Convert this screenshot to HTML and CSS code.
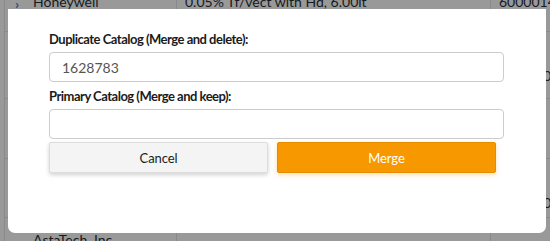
FILE: index.html
```html
<!DOCTYPE html>
<html lang="en">
<head>
    <meta charset="UTF-8">
    <title>Merge Catalog</title>
    <link rel="stylesheet" href="styles.css">
</head>
<body>
    <div class="backdrop">
        <table class="grid">
            <tr class="row-first">
                <td class="col-name"><span class="chevron">&rsaquo;</span>Honeywell</td>
                <td class="col-desc">0.05% Tf/vect with Hd, 6.00lt</td>
                <td class="col-num">6000014</td>
            </tr>
            <tr class="row-two">
                <td class="col-name"></td>
                <td class="col-desc"></td>
                <td class="col-num"><span class="far">(1000)</span></td>
            </tr>
            <tr class="row-three">
                <td class="col-name"></td>
                <td class="col-desc"></td>
                <td class="col-num"></td>
            </tr>
            <tr class="row-four">
                <td class="col-name"></td>
                <td class="col-desc"></td>
                <td class="col-num"><span class="far">(1000)</span></td>
            </tr>
            <tr class="row-last">
                <td class="col-name">AstaTech, Inc.</td>
                <td class="col-desc"></td>
                <td class="col-num"></td>
            </tr>
        </table>
    </div>

    <div class="modal">
        <label class="field-label" for="duplicate">Duplicate Catalog (Merge and delete):</label>
        <input class="field-input first" type="text" id="duplicate" value="1628783">
        <label class="field-label" for="primary">Primary Catalog (Merge and keep):</label>
        <input class="field-input" type="text" id="primary">
        <div class="actions">
            <button class="btn btn-cancel">Cancel</button>
            <button class="btn btn-merge">Merge</button>
        </div>
    </div>
</body>
</html>
```

FILE: styles.css
```css
html, body {
    overflow: hidden;
}
body {
    margin: 0;
    background-color: #999999;
    font-family: Lato, "Open Sans", sans-serif;
}
.backdrop {
    height: 241px;
    overflow: hidden;
}
.grid {
    border-collapse: collapse;
    table-layout: fixed;
    margin-top: -20px;
    margin-left: 4px;
    width: 546px;
    color: #161a22;
    font-size: 14px;
}
.grid td {
    border-left: 1px solid #8a8a8a;
    border-bottom: 1px solid #8a8a8a;
    vertical-align: top;
    padding: 13px 0 0 8px;
    white-space: nowrap;
    overflow: hidden;
}
.grid td.col-name {
    width: 143px;
    padding-left: 28px;
    position: relative;
}
.col-desc {
    width: 305px;
}
.col-num {
    width: 54px;
}
.row-first { height: 51px; }
.row-two { height: 67px; }
.row-three { height: 60px; }
.row-four { height: 59px; }
.row-last { height: 40px; }
.chevron {
    position: absolute;
    left: 10px;
    top: 15px;
    color: #1d4f8a;
    font-weight: bold;
}
.far {
    display: block;
    padding-top: 22px;
    text-align: right;
    margin-right: -2px;
}
.modal {
    position: absolute;
    left: 8px;
    top: 9px;
    width: 538px;
    height: 224px;
    box-sizing: border-box;
    background: #ffffff;
    border-radius: 0 0 7px 7px;
    padding: 20px 42px 0 41px;
}
.field-label {
    display: block;
    font-weight: bold;
    font-size: 13px;
    letter-spacing: -0.5px;
    line-height: 20px;
    color: #1b1b1b;
    margin-bottom: 3px;
}
.field-input {
    display: block;
    width: 100%;
    height: 30px;
    box-sizing: border-box;
    border: 1px solid #cccccc;
    border-radius: 4px;
    padding: 0 12px;
    font-family: Lato, sans-serif;
    font-size: 14px;
    color: #555555;
    margin: 0 0 2px 0;
}
.field-input.first {
    margin-bottom: 4px;
}
.actions {
    display: flex;
    gap: 9px;
    padding-right: 8px;
    margin-top: 3px;
}
.btn {
    flex: 1;
    height: 31px;
    font-family: Lato, sans-serif;
    font-size: 13px;
    letter-spacing: -0.1px;
    border-radius: 2px;
    cursor: pointer;
}
.btn-cancel {
    background-color: #f4f4f4;
    border: 1px solid #dddddd;
    color: #1b1b1b;
    box-shadow: 0 2px 4px rgba(0, 0, 0, 0.18);
}
.btn-merge {
    background-color: #f79800;
    border: 1px solid #e58c00;
    color: #ffffff;
    box-shadow: 0 2px 5px rgba(247, 152, 0, 0.3);
}
```
